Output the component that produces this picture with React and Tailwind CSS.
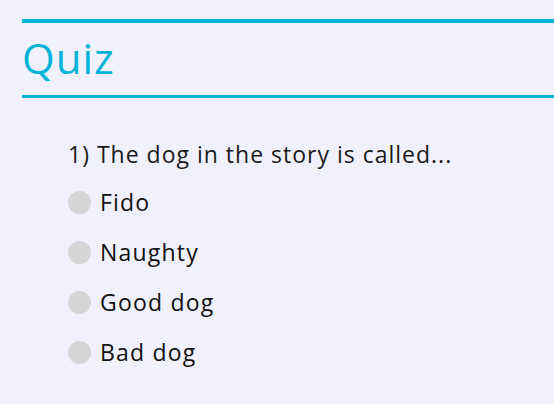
export default function App() {
  const options = ["Fido", "Naughty", "Good dog", "Bad dog"];

  return (
    <div
      className="min-h-[404px] w-[554px] bg-[#f1f1fd] pt-[19px] pl-[22px]"
      style={{ fontFamily: "'Open Sans', 'Noto Sans', sans-serif" }}
    >
      <div className="border-t-4 border-b-[3px] border-[#00b4d8]">
        <h1 className="h-[72px] pt-[13px] text-[42px] leading-[44px] tracking-[1px] text-[#00b4d8]">
          Quiz
        </h1>
      </div>

      <div className="pl-[46px] pt-[44px]">
        <p className="text-[23px] leading-[24px] tracking-[1px] text-[#1a1a1a]">
          1) The dog in the story is called...
        </p>
        <ul className="mt-[24px] flex flex-col gap-[26px]">
          {options.map((opt) => (
            <li key={opt} className="flex h-[24px] items-center">
              <span className="mr-[9px] h-[23px] w-[23px] rounded-full bg-[#d6d6d6]" />
              <span className="text-[23px] leading-[24px] tracking-[1.2px] text-[#111]">{opt}</span>
            </li>
          ))}
        </ul>
      </div>
    </div>
  );
}
